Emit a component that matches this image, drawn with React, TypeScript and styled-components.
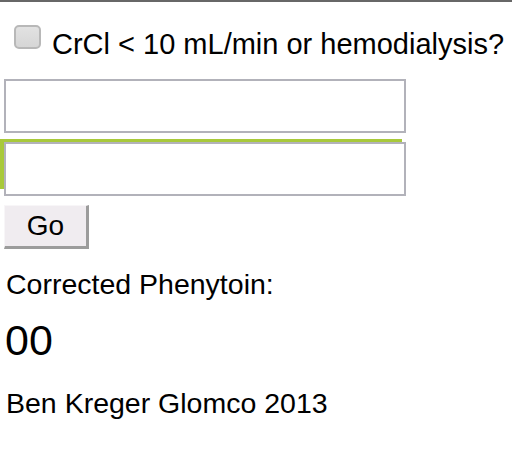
import React from "react";
import styled, { createGlobalStyle } from "styled-components";

const Global = createGlobalStyle`
  html, body { margin: 0; padding: 0; background: #ffffff; }
  body { font-family: "Liberation Sans", Arial, sans-serif; color: #000; }
`;

const Page = styled.div`
  border-top: 2px solid #676767;
  width: 512px;
  height: 448px;
  box-sizing: content-box;
  display: flex;
  flex-direction: column;
  align-items: flex-start;
  padding-left: 4px;
`;

const CheckRow = styled.label`
  display: flex;
  align-items: flex-start;
  gap: 11px;
  margin-top: 23px;
  margin-left: 10px;
  font-size: 29px;
  line-height: 32px;
  white-space: nowrap;
`;

const Check = styled.input.attrs({ type: "checkbox" })`
  appearance: none;
  margin: 0;
  width: 27px;
  height: 24px;
  box-sizing: border-box;
  border: 2px solid #b8b8b8;
  border-radius: 5px;
  background: linear-gradient(#e2e2e2, #d6d6d6);
`;

const LabelText = styled.span`
  margin-top: 3px;
`;

const Field = styled.input.attrs({ type: "text" })`
  width: 402px;
  height: 54px;
  box-sizing: border-box;
  border: 2px solid #b2b2ba;
  background: #fff;
  margin: ${(p: { $top: number }) => p.$top}px 0 0 0;
  padding: 0 6px;
  font-size: 22px;
  outline: none;
`;

const FocusWrap = styled.div`
  position: relative;
  margin-top: 9px;
  &::before {
    content: "";
    position: absolute;
    left: -4px;
    top: -3px;
    width: 402px;
    height: 50px;
    background: #a8c93a;
  }
  & > input { position: relative; display: block; }
`;

const GoButton = styled.button`
  margin-top: 9px;
  width: 85px;
  height: 44px;
  box-sizing: border-box;
  background: #f0ecf0;
  border-style: solid;
  border-width: 1px 3px 3px 1px;
  border-color: #f8f6f8 #9c9c9c #9c9c9c #f8f6f8;
  font-family: "Liberation Sans", Arial, sans-serif;
  font-size: 28px;
  color: #000;
  padding: 0;
  line-height: 1;
`;

const Caption = styled.div`
  font-size: 28.5px;
  line-height: 32px;
  margin-top: ${(p: { $top: number }) => p.$top}px;
  margin-left: 2px;
`;

const Result = styled.div`
  font-size: 43px;
  line-height: 44px;
  margin-top: 18px;
  margin-left: 1px;
`;

export default function App() {
  return (
    <>
      <Global />
      <Page>
        <CheckRow>
          <Check />
          <LabelText>CrCl &lt; 10 mL/min or hemodialysis?</LabelText>
        </CheckRow>
        <Field $top={19} />
        <FocusWrap>
          <Field $top={0} />
        </FocusWrap>
        <GoButton>Go</GoButton>
        <Caption $top={19}>Corrected Phenytoin:</Caption>
        <Result>00</Result>
        <Caption $top={25}>Ben Kreger Glomco 2013</Caption>
      </Page>
    </>
  );
}
